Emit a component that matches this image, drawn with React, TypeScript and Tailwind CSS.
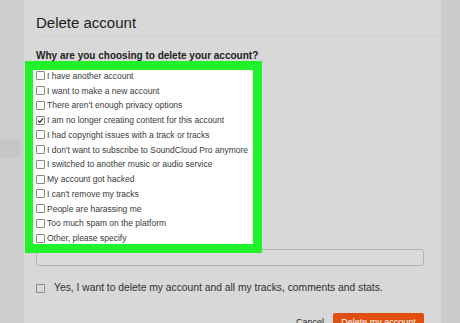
import React from "react";

const reasons = [
  "I have another account",
  "I want to make a new account",
  "There aren't enough privacy options",
  "I am no longer creating content for this account",
  "I had copyright issues with a track or tracks",
  "I don't want to subscribe to SoundCloud Pro anymore",
  "I switched to another music or audio service",
  "My account got hacked",
  "I can't remove my tracks",
  "People are harassing me",
  "Too much spam on the platform",
  "Other, please specify",
];

function Box({ checked }: { checked?: boolean }) {
  return (
    <span className="w-[9px] h-[9px] shrink-0 border border-[#8a8a8a] rounded-[1px] bg-white flex items-center justify-center">
      {checked && (
        <svg width="7" height="7" viewBox="0 0 7 7">
          <path d="M1 3.6 L2.8 5.4 L6 1.4" fill="none" stroke="#222" strokeWidth="1.2" />
        </svg>
      )}
    </span>
  );
}

export default function App() {
  return (
    <div
      className="w-[460px] h-[323px] flex overflow-hidden bg-[#d8d8d8]"
      style={{ fontFamily: '"Liberation Sans", Arial, sans-serif' }}
    >
      <div className="w-[24px] shrink-0 bg-[#cdcdcd] flex flex-col">
        <div className="mt-[140px] h-[18px] w-[20px] bg-[#c6c6c6]" />
      </div>
      <div className="w-[417px] shrink-0 h-[323px] overflow-hidden flex flex-col pl-[12px] pr-[17px]">
        <div className="shrink-0 pt-[14px] h-[36px] border-b border-[#d0d0d0] -mr-[17px]">
          <div className="text-[15px] leading-[18px] text-[#1c1c1c]">Delete account</div>
        </div>
        <div className="shrink-0 mt-[14px] text-[10px] leading-[11px] font-bold text-[#222]">
          Why are you choosing to delete your account?
        </div>
        <div className="shrink-0 relative z-10 -ml-[11px] w-[237px] border-[9px] border-l-[8px] border-[#22f22a]">
          <div className="bg-white h-[174px] overflow-hidden flex flex-col pl-[3px]">
            {reasons.map((r, i) => (
              <div
                key={i}
                className={`h-[14.75px] shrink-0 flex items-center gap-[2px] ${i === 0 ? "-mt-[1.5px]" : ""}`}
              >
                <Box checked={i === 3} />
                <span className="text-[8.5px] leading-[10px] text-[#3a3a3a] whitespace-nowrap">{r}</span>
              </div>
            ))}
          </div>
        </div>
        <div className="shrink-0 -mt-[4px] h-[17px] border border-[#b3b3b3] rounded-[3px] bg-[#dadada]" />
        <div className="shrink-0 mt-[16px] h-[12px] flex items-center gap-[9px]">
          <span className="w-[9px] h-[9px] border border-[#8a8a8a] rounded-[1px] bg-[#dadada]" />
          <span className="text-[10.3px] leading-[12px] text-[#2e2e2e] whitespace-nowrap">
            Yes, I want to delete my account and all my tracks, comments and stats.
          </span>
        </div>
        <div className="shrink-0 mt-[19px] flex justify-end items-start gap-[9px]">
          <span className="pt-[4px] text-[9px] leading-[11px] text-[#2e2e2e]">Cancel</span>
          <span className="w-[91px] h-[20px] rounded-t-[2px] bg-[#e04f10] text-white text-[9px] leading-[11px] pt-[4px] text-center">
            Delete my account
          </span>
        </div>
      </div>
      <div className="flex-1 bg-[#cbcbcb]" />
    </div>
  );
}
